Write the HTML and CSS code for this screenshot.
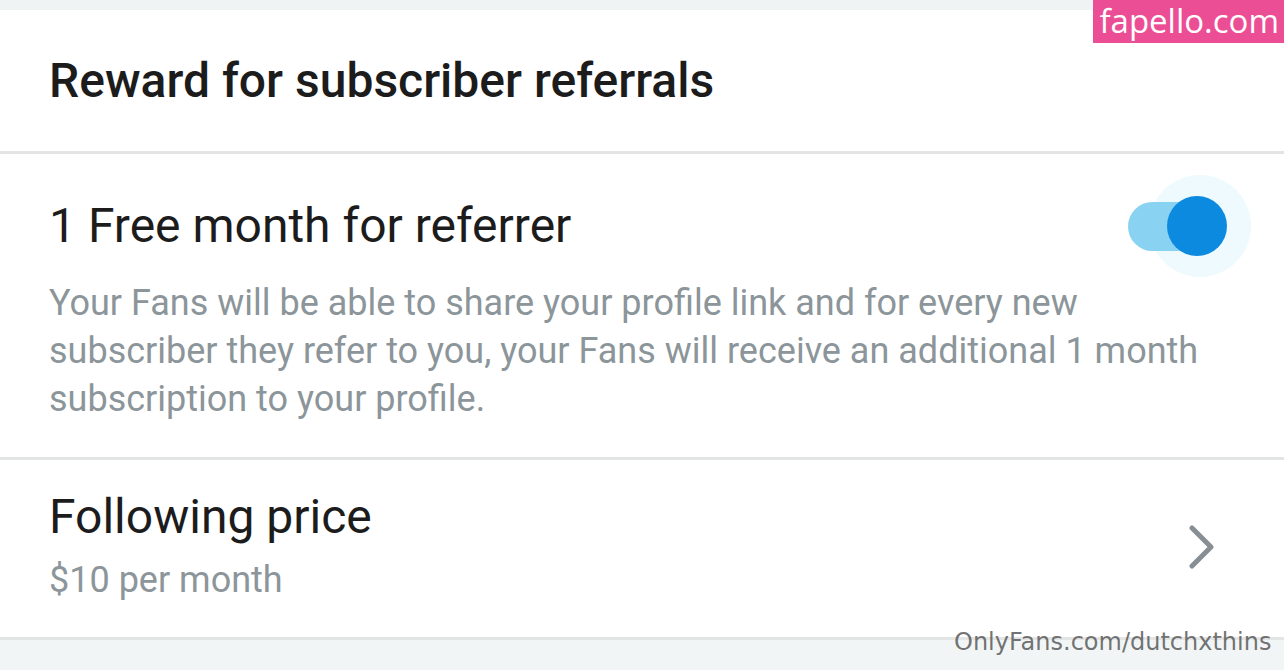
FILE: index.html
```html
<!DOCTYPE html>
<html>
<head>
<meta charset="utf-8">
<link rel="stylesheet" href="styles.css">
</head>
<body>
<div class="page">
  <div class="topstrip"></div>
  <section class="card head">
    <h1 class="title">Reward for subscriber referrals</h1>
  </section>
  <section class="card referrer">
    <div class="row">
      <div class="row-title">1 Free month for referrer</div>
      <div class="toggle">
        <span class="halo"></span>
        <span class="track"></span>
        <span class="knob"></span>
      </div>
    </div>
    <p class="desc">Your Fans will be able to share your profile link and for every new subscriber they refer to you, your Fans will receive an additional 1 month subscription to your profile.</p>
  </section>
  <section class="card price">
    <div class="price-text">
      <div class="row-title">Following price</div>
      <div class="sub">$10 per month</div>
    </div>
    <svg class="chevron" width="26" height="44" viewBox="0 0 26 44">
      <polyline points="3,3 22,22 3,41" fill="none" stroke="#878f95" stroke-width="5" stroke-linecap="round" stroke-linejoin="round"/>
    </svg>
  </section>
  <div class="bottom"></div>
  <div class="badge">fapello.com</div>
  <div class="wm">OnlyFans.com/dutchxthins</div>
</div>
</body>
</html>
```
FILE: styles.css
```css
html, body {
  margin: 0;
  padding: 0;
  background: #f0f4f4;
}
.page {
  position: relative;
  width: 1284px;
  height: 670px;
  overflow: hidden;
  font-family: Roboto, "Liberation Sans", sans-serif;
  background: #f0f4f4;
}
.topstrip {
  height: 10px;
  background: #eff3f3;
}
.card {
  background: #fff;
  border-bottom: 3px solid #e3e4e4;
  padding-left: 49px;
}
.head {
  padding-top: 41px;
  padding-bottom: 40px;
}
.title {
  margin: 0;
  font-size: 48px;
  line-height: 60px;
  font-weight: 500;
  color: #1c1c1c;
}
.referrer {
  padding-top: 42px;
  padding-bottom: 34px;
  padding-right: 57px;
}
.row {
  display: flex;
  align-items: center;
  justify-content: space-between;
}
.row-title {
  font-size: 48px;
  line-height: 60px;
  color: #1c1c1c;
}
.desc {
  margin: 23px 0 0;
  font-size: 36px;
  line-height: 48px;
  color: #8b959a;
  max-width: 1165px;
}
.toggle {
  position: relative;
  width: 99px;
  height: 60px;
}
.halo {
  position: absolute;
  left: 21px;
  top: -21px;
  width: 102px;
  height: 102px;
  border-radius: 50%;
  background: #eefafd;
}
.track {
  position: absolute;
  left: 0;
  top: 6px;
  width: 94px;
  height: 49px;
  border-radius: 25px;
  background: #8ad2f1;
}
.knob {
  position: absolute;
  left: 39px;
  top: 0;
  width: 60px;
  height: 60px;
  border-radius: 50%;
  background: #0b8ae0;
}
.price {
  display: flex;
  align-items: center;
  justify-content: space-between;
  padding-top: 27px;
  padding-bottom: 37px;
  padding-right: 69px;
}
.chevron {
  margin-top: 6px;
}
.sub {
  margin-top: 13px;
  font-size: 36px;
  line-height: 40px;
  color: #8b959a;
}
.bottom {
  height: 40px;
  background: #f1f5f5;
}
.badge {
  position: absolute;
  top: 0;
  right: 0;
  padding: 0 5px 0 6px;
  height: 43px;
  background: #ec4e96;
  color: #fff;
  font-family: "Open Sans", "DejaVu Sans", sans-serif;
  font-size: 33px;
  line-height: 41px;
  white-space: nowrap;
}
.wm {
  position: absolute;
  left: 954px;
  top: 624px;
  font-family: "DejaVu Sans", sans-serif;
  font-size: 24px;
  line-height: 36px;
  color: rgba(90, 90, 90, 0.85);
}
```
